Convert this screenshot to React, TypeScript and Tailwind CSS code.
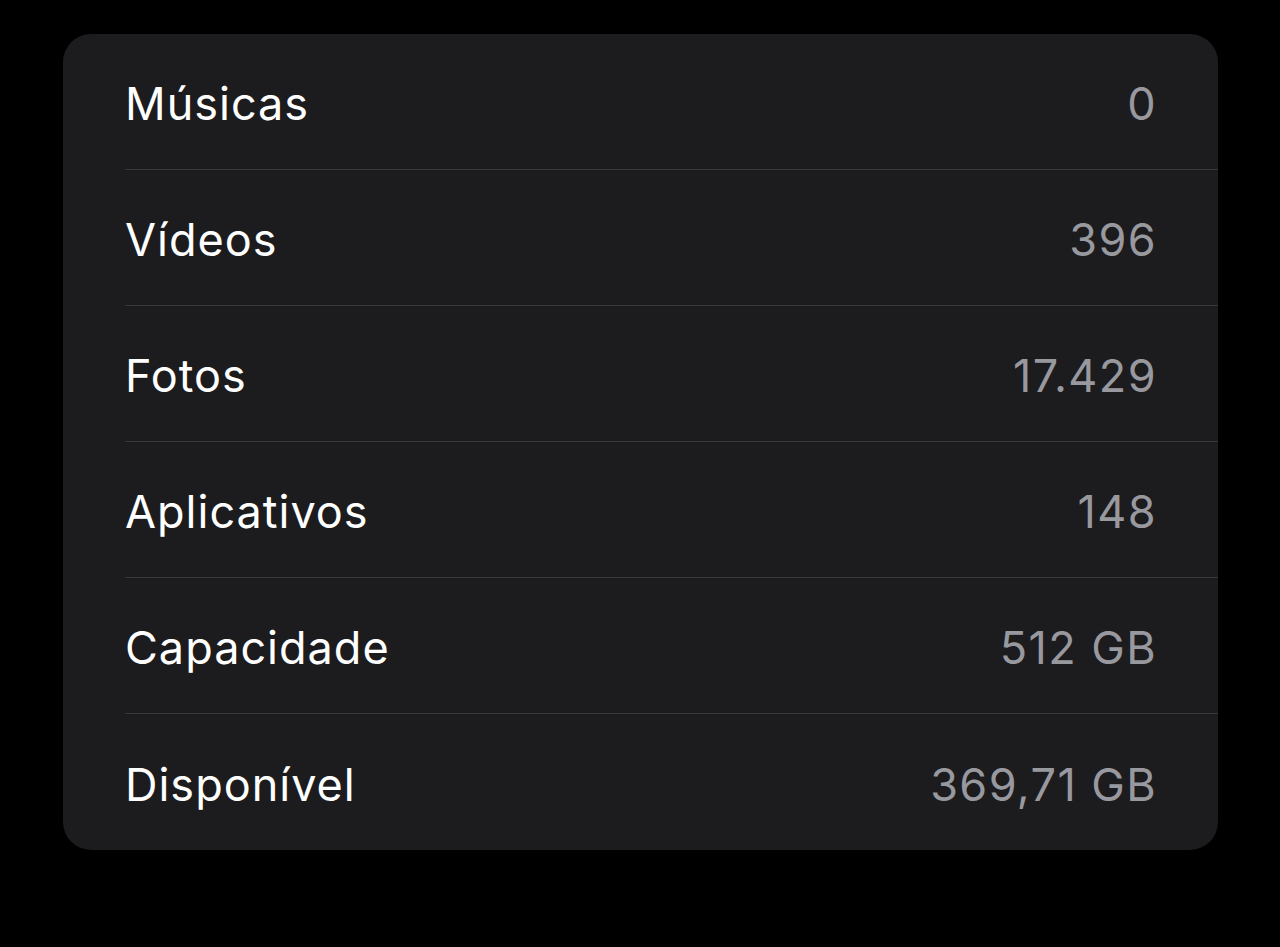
const rows = [
  { label: "Músicas", value: "0" },
  { label: "Vídeos", value: "396" },
  { label: "Fotos", value: "17.429" },
  { label: "Aplicativos", value: "148" },
  { label: "Capacidade", value: "512 GB" },
  { label: "Disponível", value: "369,71 GB" },
];

const App = () => {
  return (
    <div className="min-h-[947px] w-full bg-black pt-[34px] pl-[63px] font-['Inter',sans-serif]">
      <div className="w-[1155px] rounded-[28px] bg-[#1c1c1e] pl-[62px] overflow-hidden">
        {rows.map((row, i) => (
          <div
            key={i}
            className={`flex h-[136px] items-center justify-between pt-[4px] pr-[61px] ${
              i < rows.length - 1 ? "border-b border-[#38383a]" : ""
            }`}
          >
            <span className="text-[45px] leading-none tracking-[1px] text-white">{row.label}</span>
            <span className="text-[45px] leading-none tracking-[1.4px] text-[#98989f]">{row.value}</span>
          </div>
        ))}
      </div>
    </div>
  );
};

export default App;
